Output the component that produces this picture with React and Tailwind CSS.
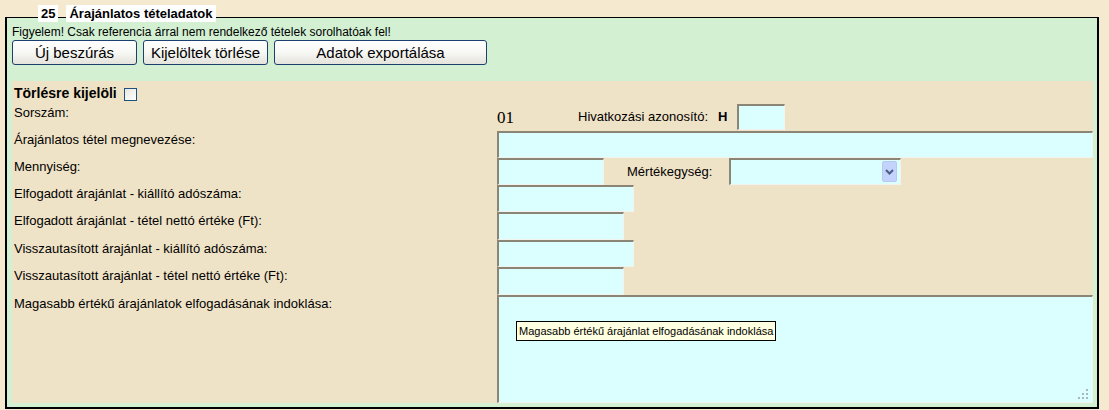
import React from "react";

const inputCls =
  "block h-full bg-[#dbffff] border-t-2 border-l-2 border-r border-b border-t-[#8a8575] border-l-[#8a8575] border-r-[#f2f2ee] border-b-[#f2f2ee] outline-none";

function Row({ label, h, children }) {
  return (
    <div className={"flex " + h}>
      <div className="w-[485px] shrink-0 pl-[2px] pt-[1px] text-[13px] leading-[16px] text-black">
        {label}
      </div>
      <div className="flex flex-1 items-stretch">{children}</div>
    </div>
  );
}

function Btn({ w, children }) {
  return (
    <button
      type="button"
      className={
        "h-[25px] rounded-[3px] border border-[#1b3f6e] bg-gradient-to-b from-white via-[#f7f7f4] to-[#e4e3dc] text-[15px] leading-[22px] text-black " +
        w
      }
    >
      {children}
    </button>
  );
}

export default function App() {
  return (
    <div className="h-[410px] w-[1109px] overflow-hidden bg-[#f5e9d0] pl-[5px] pt-[17px] font-['Liberation_Sans',Arial,sans-serif] text-black">
      <div className="relative h-[392px] w-[1094px] border-t border-l-2 border-r-2 border-b-2 border-black bg-[#d3f0d3]">
        <div className="absolute left-[31px] top-[-13px] flex h-[17px] items-stretch gap-[8px] text-[13px] font-bold leading-[17px]">
          <span className="bg-white px-[3px]">25</span>
          <span className="bg-white px-[3px]">Árajánlatos tételadatok</span>
        </div>

        <div className="pl-[5px] pt-[7px] text-[12px] leading-[14px]">
          Figyelem! Csak referencia árral nem rendelkező tételek sorolhatóak fel!
        </div>
        <div className="mt-[1px] flex gap-[6px] pl-[5px]">
          <Btn w="w-[125px]">Új beszúrás</Btn>
          <Btn w="w-[125px]">Kijelöltek törlése</Btn>
          <Btn w="w-[213px]">Adatok exportálása</Btn>
        </div>

        <div className="ml-[5px] mt-[16px] w-[1081px] bg-[#efe3c7]">
          <div className="flex h-[23px] items-center pl-[2px]">
            <span className="text-[14px] font-bold leading-[16px]">Törlésre kijelöli</span>
            <span className="ml-[7px] mt-[3px] block h-[13px] w-[13px] border border-[#1c5180] bg-gradient-to-br from-[#e6e6e0] to-white" />
          </div>

          <Row label="Sorszám:" h="h-[27px]">
            <div className="flex w-[81px] items-center font-['Liberation_Serif',serif] text-[17px] leading-[20px]">
              01
            </div>
            <div className="flex w-[136px] items-center pb-[2px] text-[13px] leading-[16px]">
              Hivatkozási azonosító:
            </div>
            <div className="flex w-[23px] items-center pb-[2px] pl-[4px] text-[13px] font-bold leading-[16px]">
              H
            </div>
            <input readOnly className={inputCls + " !h-[26px] w-[48px]"} />
          </Row>

          <Row label="Árajánlatos tétel megnevezése:" h="h-[27px]">
            <input readOnly className={inputCls + " w-full"} />
          </Row>

          <Row label="Mennyiség:" h="h-[27px]">
            <input readOnly className={inputCls + " w-[107px]"} />
            <div className="flex w-[125px] items-center pl-[23px] text-[13px] leading-[16px]">
              Mértékegység:
            </div>
            <div className="relative h-full w-[172px] border-t-2 border-l-2 border-r border-b border-t-[#8a8575] border-l-[#8a8575] border-r-[#f2f2ee] border-b-[#f2f2ee] bg-[#dbffff]">
              <div className="absolute right-[3px] top-[1px] flex h-[21px] w-[15px] items-center justify-center rounded-[2px] border border-[#b7c8f2] bg-[#c3d3fb]">
                <svg width="9" height="6" viewBox="0 0 9 6">
                  <path d="M1 1 L4.5 4.5 L8 1" fill="none" stroke="#4a5e86" strokeWidth="2" />
                </svg>
              </div>
            </div>
          </Row>

          <Row label="Elfogadott árajánlat - kiállító adószáma:" h="h-[27px]">
            <input readOnly className={inputCls + " w-[137px]"} />
          </Row>
          <Row label="Elfogadott árajánlat - tétel nettó értéke (Ft):" h="h-[28px]">
            <input readOnly className={inputCls + " w-[127px]"} />
          </Row>
          <Row label="Visszautasított árajánlat - kiállító adószáma:" h="h-[27px]">
            <input readOnly className={inputCls + " w-[137px]"} />
          </Row>
          <Row label="Visszautasított árajánlat - tétel nettó értéke (Ft):" h="h-[28px]">
            <input readOnly className={inputCls + " w-[127px]"} />
          </Row>

          <Row label="Magasabb értékű árajánlatok elfogadásának indoklása:" h="h-[108px]">
            <div className="relative h-full w-full border-t-2 border-l-2 border-r border-b border-t-[#8a8575] border-l-[#8a8575] border-r-[#f2f2ee] border-b-[#f2f2ee] bg-[#dbffff]">
              <div className="absolute left-[17px] top-[24px] border border-black bg-[#ffffe1] px-[2px] text-[11px] leading-[18px] whitespace-nowrap">
                Magasabb értékű árajánlat elfogadásának indoklása
              </div>
              <svg
                className="absolute bottom-[2px] right-[3px]"
                width="11"
                height="11"
                viewBox="0 0 11 11"
              >
                <rect x="8" y="0" width="2" height="2" fill="#a9b7c0" />
                <rect x="4" y="4" width="2" height="2" fill="#a9b7c0" />
                <rect x="8" y="4" width="2" height="2" fill="#a9b7c0" />
                <rect x="0" y="8" width="2" height="2" fill="#a9b7c0" />
                <rect x="4" y="8" width="2" height="2" fill="#a9b7c0" />
                <rect x="8" y="8" width="2" height="2" fill="#a9b7c0" />
              </svg>
            </div>
          </Row>
        </div>
      </div>
    </div>
  );
}
